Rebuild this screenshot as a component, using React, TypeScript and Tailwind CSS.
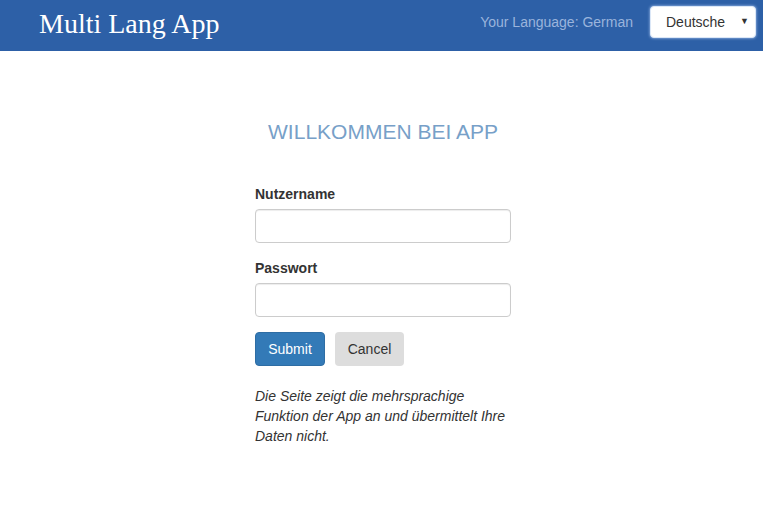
export default function App() {
  return (
    <div className="min-h-[505px] bg-white font-['Liberation_Sans',Arial,sans-serif] text-[14px] text-[#333]">
      <header className="flex h-[51px] items-center justify-between bg-[#2d60a7]">
        <h1 className="pb-[4px] pl-[39px] font-['Liberation_Serif','Times_New_Roman',serif] text-[28px] leading-none text-white">
          Multi Lang App
        </h1>
        <div className="flex items-center self-start pr-[7px] pt-[6px]">
          <span className="text-[14px] text-[#9ab4dc]">Your Language: German</span>
          <div className="ml-[17px] flex h-[32px] w-[106px] items-center justify-between rounded-[4px] border border-[#dbe7f7] bg-white pl-[15px] pr-[6px] shadow-[0_0_3px_rgba(200,220,255,0.9)]">
            <span className="text-[14px] text-[#333]">Deutsche</span>
            <span className="text-[9px] text-[#333]">▼</span>
          </div>
        </div>
      </header>

      <main className="flex justify-center pl-[3px]">
        <div className="w-[256px]">
          <h2 className="mt-[70px] whitespace-nowrap text-center text-[21px] leading-[22px] text-[#77a0c8]">
            WILLKOMMEN BEI APP
          </h2>
          <form className="mt-[41px]" onSubmit={(e) => e.preventDefault()}>
            <div className="mb-[15px]">
              <label className="mb-[5px] block text-[14px] font-bold leading-[20px]">Nutzername</label>
              <input
                type="text"
                className="block h-[34px] w-full rounded-[4px] border border-[#ccc] px-3 shadow-[inset_0_1px_1px_rgba(0,0,0,0.075)] outline-none"
              />
            </div>
            <div className="mb-[15px]">
              <label className="mb-[5px] block text-[14px] font-bold leading-[20px]">Passwort</label>
              <input
                type="password"
                className="block h-[34px] w-full rounded-[4px] border border-[#ccc] px-3 shadow-[inset_0_1px_1px_rgba(0,0,0,0.075)] outline-none"
              />
            </div>
            <div className="flex gap-[10px]">
              <button
                type="submit"
                className="h-[34px] w-[70px] rounded-[4px] border border-[#2e6da4] bg-[#337ab7] text-[14px] text-white"
              >
                Submit
              </button>
              <button
                type="button"
                className="h-[34px] w-[69px] rounded-[4px] bg-[#dddddd] text-[14px] text-[#333]"
              >
                Cancel
              </button>
            </div>
          </form>
          <p className="mt-[20px] text-[14px] italic leading-[20px] text-[#333]">
            Die Seite zeigt die mehrsprachige Funktion der App an und übermittelt Ihre Daten nicht.
          </p>
        </div>
      </main>
    </div>
  );
}
